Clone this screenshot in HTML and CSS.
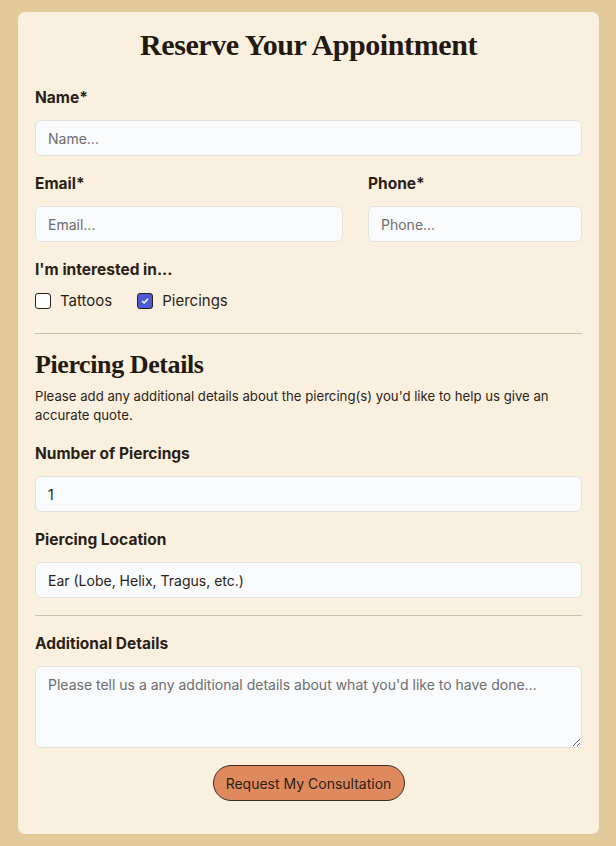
FILE: index.html
```html
<!DOCTYPE html>
<html lang="en">
<head>
    <meta charset="UTF-8">
    <meta name="viewport" content="width=device-width, initial-scale=1.0">
    <title>Reserve Your Appointment</title>
    <link rel="stylesheet" href="styles.css">
</head>
<body>
    <section class="card">
        <h1 class="title">Reserve Your Appointment</h1>
        <form class="booking-form">
            <div class="field field-first">
                <label for="name">Name*</label>
                <input type="text" id="name" placeholder="Name...">
            </div>
            <div class="field-row">
                <div class="field">
                    <label for="email">Email*</label>
                    <input type="email" id="email" placeholder="Email...">
                </div>
                <div class="field">
                    <label for="phone">Phone*</label>
                    <input type="tel" id="phone" placeholder="Phone...">
                </div>
            </div>
            <div class="field">
                <label>I'm interested in...</label>
                <div class="checks">
                    <label class="check"><input type="checkbox"> Tattoos</label>
                    <label class="check"><input type="checkbox" checked> Piercings</label>
                </div>
            </div>

            <hr class="divider">

            <h2 class="subtitle">Piercing Details</h2>
            <p class="note">Please add any additional details about the piercing(s) you'd like to help us give an accurate quote.</p>

            <div class="field field-after-note">
                <label for="count">Number of Piercings</label>
                <input type="text" id="count" value="1">
            </div>
            <div class="field">
                <label for="location">Piercing Location</label>
                <input type="text" id="location" value="Ear (Lobe, Helix, Tragus, etc.)">
            </div>

            <hr class="divider divider-small">

            <div class="field">
                <label for="details">Additional Details</label>
                <textarea id="details" placeholder="Please tell us a any additional details about what you'd like to have done..."></textarea>
            </div>

            <div class="actions">
                <button type="button" class="submit-btn">Request My Consultation</button>
            </div>
        </form>
    </section>
</body>
</html>
```

FILE: styles.css
```css
body {
    margin: 0;
    padding: 12px 17px 12px 18px;
    background: #e2ca9a;
    font-family: Inter, "Noto Sans", sans-serif;
    color: #2a1f16;
}

.card {
    background: #faf0df;
    border-radius: 7px;
    padding: 17px 17px 33px;
}

.title {
    margin: 0;
    font-family: "Liberation Serif", serif;
    font-size: 30px;
    line-height: 32px;
    font-weight: bold;
    text-align: center;
    letter-spacing: -0.4px;
    color: #221910;
}

/* form fields */
.field {
    display: flex;
    flex-direction: column;
    margin-top: 18px;
}

.field-first {
    margin-top: 27px;
}

.field-after-note {
    margin-top: 19px;
}

.field > label {
    font-size: 15.5px;
    font-weight: 700;
    line-height: 20px;
    margin-bottom: 12px;
}

.field-row {
    display: grid;
    grid-template-columns: 308fr 214fr;
    gap: 25px;
}

.field input[type="text"],
.field input[type="email"],
.field input[type="tel"],
.field textarea {
    box-sizing: border-box;
    width: 100%;
    height: 36px;
    padding: 0 12px;
    border: 1px solid #e6e3dc;
    border-radius: 6px;
    background: #f8fafc;
    font-family: inherit;
    font-size: 14px;
    color: #2a1f16;
}

.field input::placeholder,
.field textarea::placeholder {
    color: #6e6e6e;
}

.field textarea {
    height: 82px;
    padding: 9px 12px;
    resize: vertical;
}

/* checkboxes */
.checks {
    display: flex;
    gap: 25px;
    margin-top: -1px;
}

.check {
    display: flex;
    align-items: center;
    gap: 9px;
    font-size: 15px;
    line-height: 20px;
}

.check input {
    appearance: none;
    margin: 0;
    width: 16px;
    height: 16px;
    border: 1.5px solid #2a1f16;
    border-radius: 3px;
    background: #fff;
    box-sizing: border-box;
}

.check input:checked {
    background: #4d5bd6 url("data:image/svg+xml,%3Csvg xmlns='http://www.w3.org/2000/svg' viewBox='0 0 16 16'%3E%3Cpath d='M4.5 8.3l2.3 2.3 4.7-4.9' fill='none' stroke='white' stroke-width='2' stroke-linecap='round' stroke-linejoin='round'/%3E%3C/svg%3E") center/12px no-repeat;
}

.divider {
    border: 0;
    border-top: 1px solid #cdbfa9;
    margin: 22px 0 16px;
}

.divider-small {
    margin: 17px 0 0;
}

.subtitle {
    margin: 0 0 7px;
    font-family: "Liberation Serif", serif;
    font-size: 26px;
    line-height: 30px;
    font-weight: bold;
    letter-spacing: -0.4px;
    color: #221910;
}

.note {
    margin: 0;
    font-size: 13.2px;
    line-height: 19px;
}

.actions {
    display: flex;
    justify-content: center;
    margin-top: 17px;
}

.submit-btn {
    width: 192px;
    height: 36px;
    border: 1px solid #3a2a1f;
    border-radius: 18px;
    background: #df8a5e;
    color: #2e1d12;
    font-family: inherit;
    font-size: 14px;
    cursor: pointer;
}
```
